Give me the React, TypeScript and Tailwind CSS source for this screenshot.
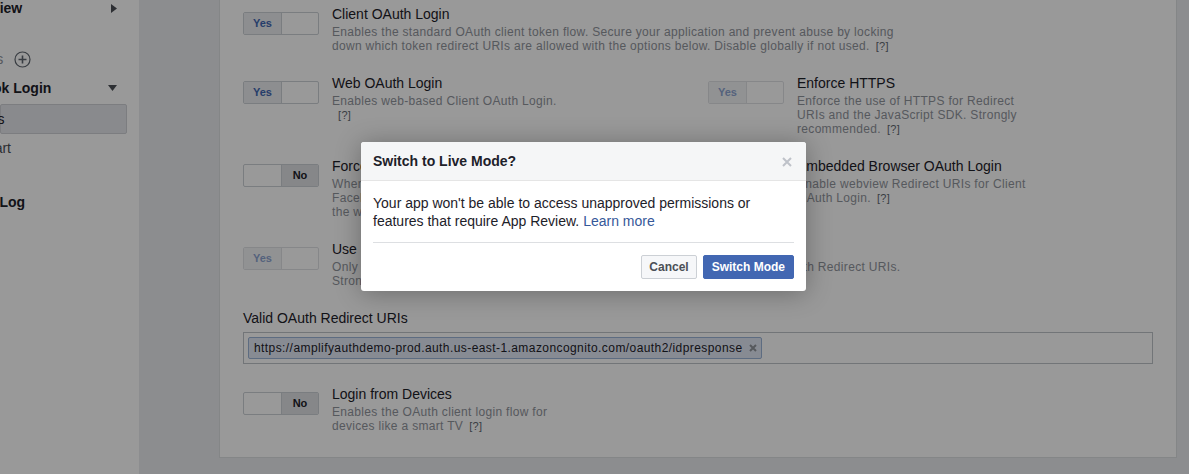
import React from "react";

const font = { fontFamily: '"Liberation Sans", Arial, sans-serif' };

function Toggle({ value, disabled }: { value: "yes" | "no"; disabled?: boolean }) {
  return (
    <div
      className={`mt-[7px] flex h-[23px] w-[76px] shrink-0 overflow-hidden rounded-[2px] border border-[#ccd0d5] bg-white text-[11px] font-bold ${
        disabled ? "opacity-60" : ""
      }`}
    >
      <div
        className={`flex w-[38px] items-center justify-center border-r border-[#ccd0d5] ${
          value === "yes" ? "bg-[#ebedf0] text-[#4267b2]" : ""
        }`}
      >
        {value === "yes" ? "Yes" : ""}
      </div>
      <div
        className={`flex flex-1 items-center justify-center ${
          value === "no" ? "bg-[#dfe1e5] text-[#1d2129]" : ""
        }`}
      >
        {value === "no" ? "No" : ""}
      </div>
    </div>
  );
}

function Help() {
  return <span className="ml-[6px] text-[11px] text-[#606770]">[?]</span>;
}

function Setting({
  value,
  disabled,
  title,
  children,
}: {
  value: "yes" | "no";
  disabled?: boolean;
  title: string;
  children: React.ReactNode;
}) {
  return (
    <div className="flex gap-[13px]">
      <Toggle value={value} disabled={disabled} />
      <div className="min-w-0">
        <div className="whitespace-nowrap text-[14px] leading-[18px] text-[#1d2129]">{title}</div>
        <div className="mt-[2px] whitespace-nowrap text-[12px] leading-[14px] tracking-[0.32px] text-[#90949c]">
          {children}
        </div>
      </div>
    </div>
  );
}

function Sidebar() {
  return (
    <aside className="w-[139px] shrink-0 overflow-hidden bg-white pr-[12px] text-[14px]">
      <div className="flex h-[16px] items-center justify-between">
        <span className="ml-[-40px] whitespace-nowrap font-bold text-[#1d2129]">Overview</span>
        <svg width="6" height="9" viewBox="0 0 6 9" className="mr-[10px]">
          <path d="M0 0 L6 4.5 L0 9 Z" fill="#4b4f56" />
        </svg>
      </div>
      <div className="mt-[35px] flex h-[16px] items-center gap-[11px]">
        <span className="ml-[-52px] whitespace-nowrap text-[#90949c]">Products</span>
        <svg width="17" height="17" viewBox="0 0 17 17">
          <circle cx="8.5" cy="8.5" r="7.5" fill="none" stroke="#606770" strokeWidth="1.2" />
          <path d="M8.5 4.5 V12.5 M4.5 8.5 H12.5" stroke="#606770" strokeWidth="1.6" />
        </svg>
      </div>
      <div className="mt-[13px] flex h-[16px] items-center justify-between">
        <span className="ml-[-56px] whitespace-nowrap font-bold text-[#1d2129]">Facebook Login</span>
        <svg width="9" height="6" viewBox="0 0 9 6" className="mr-[10px]">
          <path d="M0 0 H9 L4.5 6 Z" fill="#4b4f56" />
        </svg>
      </div>
      <div className="mt-[8px] flex h-[30px] items-center rounded-[2px] border border-[#cfd1d5] bg-[#e4e6eb]">
        <span className="ml-[-47px] whitespace-nowrap text-[#1d2129]">Settings</span>
      </div>
      <div className="mt-[6px] flex h-[16px] items-center">
        <span className="ml-[-52px] whitespace-nowrap text-[#4b4f56]">Quickstart</span>
      </div>
      <div className="mt-[38px] flex h-[16px] items-center">
        <span className="ml-[-55px] whitespace-nowrap font-bold text-[#1d2129]">Activity Log</span>
      </div>
    </aside>
  );
}

function Modal() {
  return (
    <div
      className="absolute left-[361px] top-[142px] w-[445px] overflow-hidden rounded-[3px] bg-white shadow-[0_2px_26px_rgba(0,0,0,0.3)]"
      style={font}
    >
      <div className="flex h-[39px] items-center justify-between border-b border-[#e5e5e5] bg-[#f5f6f7] px-[12px] pt-[1px]">
        <span className="text-[14px] font-bold text-[#1d2129]">Switch to Live Mode?</span>
        <svg width="10" height="10" viewBox="0 0 10 10" className="mr-[2px]">
          <path d="M1 1 L9 9 M9 1 L1 9" stroke="#bec2c9" strokeWidth="2" />
        </svg>
      </div>
      <div className="px-[12px] pt-[13px] text-[14px] leading-[18px] text-[#1d2129]">
        Your app won't be able to access unapproved permissions or
        <br />
        features that require App Review. <span className="text-[#365899]">Learn more</span>
      </div>
      <div className="mx-[12px] mt-[12px] border-t border-[#dddfe2]" />
      <div className="flex justify-end gap-[6px] px-[12px] pb-[12px] pt-[12px]">
        <button className="h-[24px] rounded-[2px] border border-[#ccd0d5] bg-[#f6f7f9] px-[7px] text-[12px] font-bold text-[#4b4f56]">
          Cancel
        </button>
        <button className="h-[24px] rounded-[2px] border border-[#4267b2] bg-[#4267b2] px-[8px] text-[12px] font-bold text-white">
          Switch Mode
        </button>
      </div>
    </div>
  );
}

export default function App() {
  return (
    <div className="relative flex h-[474px] w-full overflow-hidden bg-[#e9ebee]" style={font}>
      <Sidebar />
      <main className="pl-[80px]">
        <section className="flex h-[458px] w-[958px] flex-col gap-[21px] border border-t-0 border-[#dddfe2] bg-white pl-[23px] pt-[5px]">
          <Setting value="yes" title="Client OAuth Login">
            Enables the standard OAuth client token flow. Secure your application and prevent abuse by locking
            <br />
            down which token redirect URIs are allowed with the options below. Disable globally if not used.
            <Help />
          </Setting>

          <div className="grid grid-cols-[465px_1fr]">
            <Setting value="yes" title="Web OAuth Login">
              Enables web-based Client OAuth Login.
              <br />
              <Help />
            </Setting>
            <Setting value="yes" disabled title="Enforce HTTPS">
              Enforce the use of HTTPS for Redirect
              <br />
              URIs and the JavaScript SDK. Strongly
              <br />
              recommended.
              <Help />
            </Setting>
          </div>

          <div className="grid grid-cols-[465px_1fr]">
            <Setting value="no" title="Force Web OAuth Reauthentication">
              When on, prompts people to enter their
              <br />
              Facebook password in order to log in on
              <br />
              the web.
              <Help />
            </Setting>
            <Setting value="no" title="Embedded Browser OAuth Login">
              Enable webview Redirect URIs for Client
              <br />
              OAuth Login.
              <Help />
            </Setting>
          </div>

          <Setting value="yes" disabled title="Use Strict Mode for Redirect URIs">
            Only allow redirects that use the Facebook SDK or that exactly match the Valid OAuth Redirect URIs.
            <br />
            Strongly recommended.
            <Help />
          </Setting>

          <div>
            <div className="text-[14px] leading-[18px] text-[#1d2129]">Valid OAuth Redirect URIs</div>
            <div className="mt-[5px] flex h-[32px] w-[910px] items-center border border-[#bec3c9] px-[4px]">
              <span className="flex h-[22px] items-center gap-[6px] rounded-[2px] border border-[#9cb4d8] bg-[#e2e8f6] pl-[5px] pr-[4px] text-[12px] tracking-[0.42px] text-[#1d2129]">
                https://amplifyauthdemo-prod.auth.us-east-1.amazoncognito.com/oauth2/idpresponse
                <svg width="8" height="8" viewBox="0 0 8 8">
                  <path d="M1 1 L7 7 M7 1 L1 7" stroke="#90949c" strokeWidth="2" />
                </svg>
              </span>
            </div>
          </div>

          <Setting value="no" title="Login from Devices">
            Enables the OAuth client login flow for
            <br />
            devices like a smart TV
            <Help />
          </Setting>
        </section>
      </main>

      <div className="absolute inset-0 bg-black/40">
        <Modal />
      </div>
    </div>
  );
}
